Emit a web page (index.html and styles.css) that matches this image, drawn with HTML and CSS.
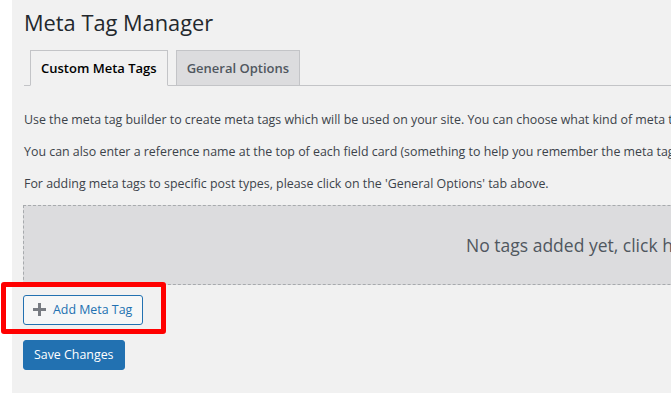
FILE: index.html
```html
<!DOCTYPE html>
<html lang="en">
<head>
<meta charset="utf-8">
<title>Meta Tag Manager</title>
<link rel="stylesheet" href="styles.css">
</head>
<body>
<div class="page">
  <aside class="menu-edge"></aside>
  <main class="content">
    <div class="wrap">
      <h1 class="title">Meta Tag Manager</h1>
      <nav class="tabs">
        <a class="tab tab-active">Custom Meta Tags</a>
        <a class="tab">General Options</a>
      </nav>
      <p class="desc">Use the meta tag builder to create meta tags which will be used on your site. You can choose what kind of meta tag you want to add and enter the values for it.</p>
      <p class="desc">You can also enter a reference name at the top of each field card (something to help you remember the meta tag), which will not be used anywhere on your site.</p>
      <p class="desc">For adding meta tags to specific post types, please click on the 'General Options' tab above.</p>
      <div class="empty">No tags added yet, click here to add one.</div>
      <div class="add-row">
        <button class="btn btn-secondary">
          <svg class="plus" width="13" height="13" viewBox="0 0 13 13" aria-hidden="true"><path d="M5 0h3v5h5v3H8v5H5V8H0V5h5z" fill="#787c82"/></svg>
          <span>Add Meta Tag</span>
        </button>
        <span class="highlight"></span>
      </div>
      <div class="save-row">
        <button class="btn btn-primary">Save Changes</button>
      </div>
    </div>
  </main>
</div>
</body>
</html>
```
FILE: styles.css
```css
html, body {
  margin: 0;
  padding: 0;
  overflow: hidden;
  background: #f1f1f1;
}
body {
  font-family: "Open Sans", "Noto Sans", sans-serif;
  color: #3c434a;
  font-size: 12.4px;
}
.page {
  display: flex;
  min-height: 393px;
}
.menu-edge {
  width: 12px;
  flex: 0 0 12px;
  background: #ffffff;
}
.content {
  flex: 0 0 auto;
  padding-left: 12px;
}
.wrap {
  width: 1216px;
}
.title {
  margin: 0;
  padding: 8px 0 0;
  font-size: 21.8px;
  font-weight: 400;
  line-height: 30px;
  color: #23282d;
}
.tabs {
  display: flex;
  margin-top: 12px;
  border-bottom: 1px solid #c3c4c7;
  padding-left: 6px;
  gap: 8px;
}
.tab {
  display: block;
  padding: 5px 10px;
  font-size: 13px;
  font-weight: 600;
  line-height: 24px;
  border: 1px solid #c3c4c7;
  background: #dcdcde;
  color: #50575e;
  margin-bottom: -1px;
}
.tab-active {
  background: #f1f1f1;
  border-bottom-color: #f1f1f1;
  color: #000;
}
.desc {
  margin: 0;
  padding-top: 24px;
  line-height: 19.5px;
  white-space: nowrap;
}
.desc + .desc {
  padding-top: 12.5px;
}
.empty {
  margin-top: 11px;
  margin-left: -1px;
  height: 78px;
  border: 1px dashed #a7aaad;
  background: #dcdcde;
  display: flex;
  align-items: center;
  justify-content: center;
  font-size: 17.5px;
  color: #50575e;
}
.add-row {
  position: relative;
  margin-top: 10px;
  margin-left: -1px;
  display: flex;
}
.btn {
  font-family: inherit;
  font-size: 12.4px;
  line-height: 28px;
  height: 30px;
  padding: 0 10px;
  border-radius: 3px;
  cursor: pointer;
  display: inline-flex;
  align-items: center;
}
.btn-secondary {
  border: 1px solid #2271b1;
  background: #f6f7f7;
  color: #2271b1;
  padding: 0 10px 0 9px;
  gap: 7px;
}
.plus {
  display: block;
}
.highlight {
  position: absolute;
  left: -22px;
  top: -13px;
  width: 155px;
  height: 42px;
  border: 5px solid #ff0000;
  border-radius: 3px;
  pointer-events: none;
}
.save-row {
  margin-top: 15px;
  margin-left: -1px;
  display: flex;
}
.btn-primary {
  border: 1px solid #2271b1;
  background: #2271b1;
  color: #ffffff;
}
```
